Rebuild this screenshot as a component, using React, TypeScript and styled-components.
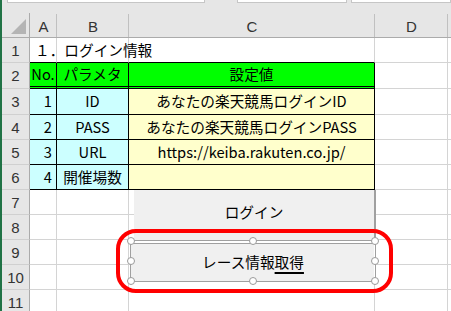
import React from "react";
import styled, { createGlobalStyle } from "styled-components";

const GlobalStyle = createGlobalStyle`
  html, body { margin: 0; padding: 0; background: #ffffff; overflow: hidden; }
  body { font-family: "Noto Sans CJK JP", "Noto Sans", sans-serif; }
`;

const Window = styled.div`
  display: flex;
  width: 451px;
  height: 311px;
  overflow: hidden;
  background: #ffffff;
`;

const Stripe = styled.div`
  width: 2px;
  flex: none;
  background: #217346;
`;

const Main = styled.div`
  flex: 1;
  display: flex;
  flex-direction: column;
  min-width: 0;
`;

const FormulaBar = styled.div`
  height: 13px;
  flex: none;
  background: #e6e6e6;
  display: flex;
  align-items: flex-start;
  padding-left: 5px;
`;

const FieldBox = styled.div<{ $w?: number; $ml?: number }>`
  height: 2px;
  background: #ffffff;
  border: 1px solid #c6c6c6;
  border-top: none;
  ${(p) => (p.$w ? `width: ${p.$w}px; flex: none;` : "flex: 1;")}
  margin-left: ${(p) => p.$ml ?? 0}px;
`;

const Sheet = styled.div`
  position: relative;
  display: grid;
  grid-template-columns: 28px 27px 72px 246px 73px 1fr;
  grid-template-rows: 25px 25px 26px 26px repeat(8, 25px);
  font-size: 14.67px;
  color: #000;
`;

const Corner = styled.div`
  background: #e6e6e6;
  border-right: 1px solid #ababab;
  border-bottom: 1px solid #ababab;
  position: relative;
  display: flex;
  align-items: flex-end;
  justify-content: flex-end;
  padding: 0 3px 3px 0;
  box-sizing: border-box;
`;

const CornerTri = styled.div`
  width: 0;
  height: 0;
  border-left: 15px solid transparent;
  border-bottom: 15px solid #b4b4b4;
`;

const ColHeader = styled.div<{ $last?: boolean }>`
  background: #e6e6e6;
  border-bottom: 1px solid #ababab;
  box-sizing: border-box;
  display: flex;
  align-items: center;
  justify-content: center;
  font-family: "Liberation Sans", "Noto Sans", sans-serif;
  font-size: 15px;
  color: #333;
  position: relative;
  padding-top: 2px;
  &::after {
    content: "";
    position: absolute;
    right: 0;
    top: 1px;
    bottom: 0;
    width: 1px;
    background: ${(p) => (p.$last ? "transparent" : "#c0c0c0")};
  }
`;

const RowHeader = styled.div`
  background: #e6e6e6;
  border-right: 1px solid #ababab;
  border-bottom: 1px solid #d0d0d0;
  box-sizing: border-box;
  display: flex;
  align-items: center;
  justify-content: center;
  font-family: "Liberation Sans", "Noto Sans", sans-serif;
  font-size: 15px;
  color: #333;
`;

type Align = "left" | "center" | "right";

const Cell = styled.div<{
  $bg?: string;
  $align?: Align;
  $boxed?: boolean;
  $bottom?: "black" | "double";
  $overflow?: boolean;
}>`
  background: ${(p) => p.$bg ?? "#ffffff"};
  box-sizing: border-box;
  border-right: 1px solid ${(p) => (p.$boxed ? "#000" : "#d4d4d4")};
  border-bottom: ${(p) =>
    p.$bottom === "double"
      ? "3px double #000"
      : p.$bottom === "black" || p.$boxed
      ? "1px solid #000"
      : "1px solid #d4d4d4"};
  display: flex;
  align-items: center;
  justify-content: ${(p) =>
    p.$align === "right" ? "flex-end" : p.$align === "left" ? "flex-start" : "center"};
  padding: 0 ${(p) => (p.$align === "right" ? "4px" : "3px")} 0 3px;
  white-space: nowrap;
  overflow: ${(p) => (p.$overflow ? "visible" : "hidden")};
  line-height: 1;
  letter-spacing: 0;
`;

const Title = styled.span`
  position: relative;
  z-index: 1;
  padding-left: 2px;
`;

const ButtonBase = styled.div`
  position: absolute;
  background: #f0f0f0;
  box-sizing: border-box;
  display: flex;
  justify-content: center;
  font-size: 14.67px;
  color: #000;
  white-space: nowrap;
`;

const LoginButton = styled(ButtonBase)`
  left: 132px;
  top: 177px;
  width: 242px;
  height: 52px;
  border-right: 2px solid #a0a0a0;
  align-items: flex-start;
  padding-top: 15px;
  line-height: 1;
`;

const RaceButton = styled(ButtonBase)`
  left: 128px;
  top: 227px;
  width: 246px;
  height: 42px;
  border: 1px solid #a0a0a0;
  box-shadow: inset 0 2px 0 #ffffff, inset 0 3px 0 #a0a0a0, inset -1px 0 0 #ffffff;
  align-items: center;
  padding-top: 2px;
  line-height: 1;
`;

const Accel = styled.span`
  text-decoration: underline;
  text-decoration-thickness: 2px;
  text-underline-offset: 4px;
`;

const Handle = styled.div<{ $x: number; $y: number }>`
  position: absolute;
  left: ${(p) => p.$x}%;
  top: ${(p) => p.$y}%;
  width: 8px;
  height: 8px;
  box-sizing: border-box;
  border-radius: 50%;
  background: #ffffff;
  border: 1px solid #9a9a9a;
  transform: translate(-50%, -50%);
`;

const Highlight = styled.div`
  position: absolute;
  left: 114px;
  top: 216px;
  width: 277px;
  height: 64px;
  box-sizing: border-box;
  border: 4.5px solid #ff0000;
  border-radius: 20px;
  pointer-events: none;
`;

const GREEN = "#00ff00";
const CYAN = "#ccffff";
const YELLOW = "#ffffcc";

const dataRows = [
  { n: "1", p: "ID", v: "あなたの楽天競馬ログインID" },
  { n: "2", p: "PASS", v: "あなたの楽天競馬ログインPASS" },
  { n: "3", p: "URL", v: "https://keiba.rakuten.co.jp/" },
  { n: "4", p: "開催場数", v: "" },
];

const handles: [number, number][] = [
  [0, 0],
  [50, 0],
  [100, 0],
  [0, 50],
  [100, 50],
  [0, 100],
  [50, 100],
  [100, 100],
];

export default function App() {
  return (
    <>
      <GlobalStyle />
      <Window>
        <Stripe />
        <Main>
          <FormulaBar>
            <FieldBox $w={196} />
            <FieldBox $w={108} $ml={32} />
            <FieldBox $ml={4} />
          </FormulaBar>
          <Sheet>
            <Corner>
              <CornerTri />
            </Corner>
            <ColHeader>A</ColHeader>
            <ColHeader>B</ColHeader>
            <ColHeader>C</ColHeader>
            <ColHeader>D</ColHeader>
            <ColHeader $last />

            <RowHeader>1</RowHeader>
            <Cell $align="left" $bottom="black" $overflow>
              <Title>１．ログイン情報</Title>
            </Cell>
            <Cell $bottom="black" />
            <Cell $bottom="black" />
            <Cell />
            <Cell />

            <RowHeader>2</RowHeader>
            <Cell $bg={GREEN} $boxed $bottom="double" $align="center">No.</Cell>
            <Cell $bg={GREEN} $boxed $bottom="double">パラメタ</Cell>
            <Cell $bg={GREEN} $boxed $bottom="double">設定値</Cell>
            <Cell />
            <Cell />

            {dataRows.map((r, i) => (
              <React.Fragment key={r.n}>
                <RowHeader>{i + 3}</RowHeader>
                <Cell $bg={CYAN} $boxed $align="right">{r.n}</Cell>
                <Cell $bg={CYAN} $boxed>{r.p}</Cell>
                <Cell $bg={YELLOW} $boxed>{r.v}</Cell>
                <Cell />
                <Cell />
              </React.Fragment>
            ))}

            {[7, 8, 9, 10, 11].map((n) => (
              <React.Fragment key={n}>
                <RowHeader>{n}</RowHeader>
                <Cell />
                <Cell />
                <Cell />
                <Cell />
                <Cell />
              </React.Fragment>
            ))}

            <LoginButton>ログイン</LoginButton>
            <RaceButton>
              レース情報<Accel>取得</Accel>
              {handles.map(([x, y]) => (
                <Handle key={`${x}-${y}`} $x={x} $y={y} />
              ))}
            </RaceButton>
            <Highlight />
          </Sheet>
        </Main>
      </Window>
    </>
  );
}
